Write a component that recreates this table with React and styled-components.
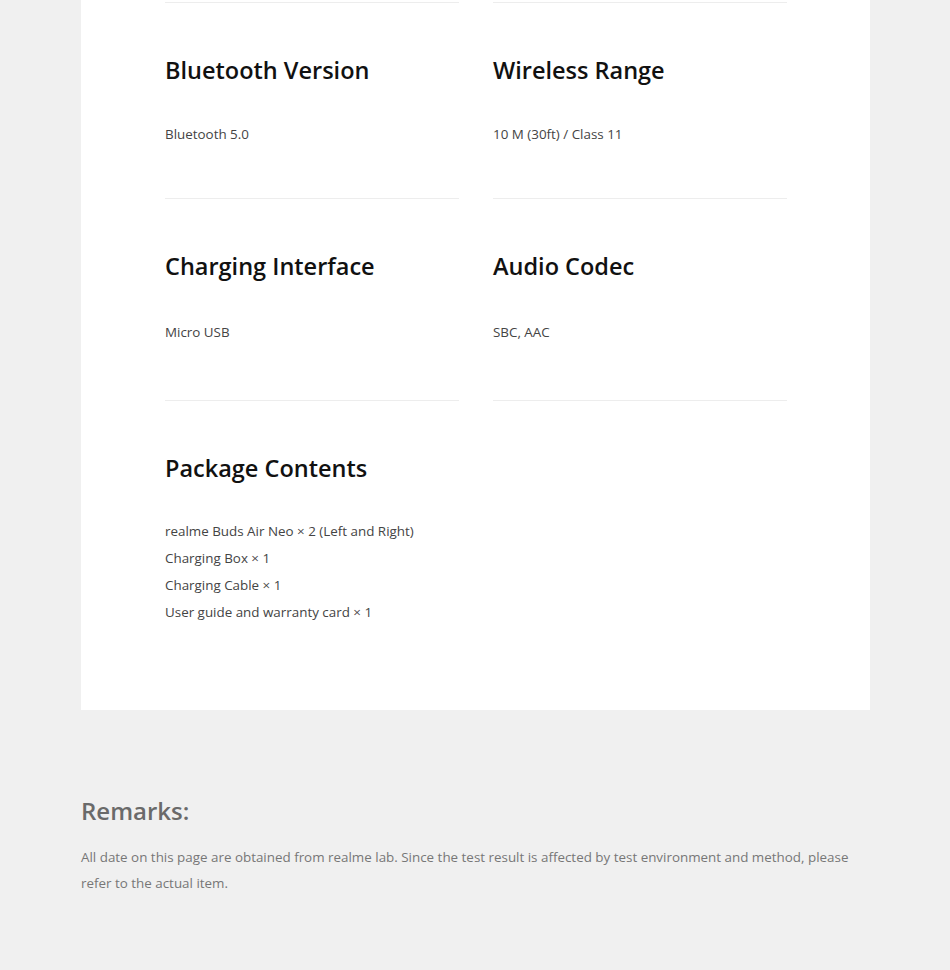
import React from "react";
import styled, { createGlobalStyle } from "styled-components";

const GlobalStyle = createGlobalStyle`
  body {
    margin: 0;
    background: #f0f0f0;
    font-family: "Open Sans", "Noto Sans", sans-serif;
  }
`;

const specs = [
  { title: "Bluetooth Version", values: ["Bluetooth 5.0"] },
  { title: "Wireless Range", values: ["10 M (30ft) / Class 11"] },
  { title: "Charging Interface", values: ["Micro USB"], tall: true },
  { title: "Audio Codec", values: ["SBC, AAC"], tall: true },
  {
    title: "Package Contents",
    values: [
      "realme Buds Air Neo × 2 (Left and Right)",
      "Charging Box × 1",
      "Charging Cable × 1",
      "User guide and warranty card × 1",
    ],
  },
];

function App() {
  return (
    <Page>
      <GlobalStyle />
      <Card>
        <SpecGrid>
          {specs.map((spec) => (
            <SpecCell key={spec.title} $tall={spec.tall}>
              <SpecTitle>{spec.title}</SpecTitle>
              <SpecValues $tall={spec.tall} $list={spec.values.length > 1}>
                {spec.values.map((v) => (
                  <p key={v}>{v}</p>
                ))}
              </SpecValues>
            </SpecCell>
          ))}
          <SpecCell />
        </SpecGrid>
      </Card>
      <Remarks>
        <h3>Remarks:</h3>
        <p>
          All date on this page are obtained from realme lab. Since the test
          result is affected by test environment and method, please refer to
          the actual item.
        </p>
      </Remarks>
    </Page>
  );
}

export default App;

const Page = styled.div`
  min-height: 100vh;
  box-sizing: border-box;
  padding-bottom: 40px;
`;

const Card = styled.div`
  width: 789px;
  margin-left: 81px;
  background: #fff;
  padding: 2px 0 34px 84px;
  box-sizing: border-box;
`;

const SpecGrid = styled.div`
  display: grid;
  grid-template-columns: 294px 294px;
  column-gap: 34px;
`;

const SpecCell = styled.div`
  border-top: 1px solid #ededed;
  padding: 51px 0 ${(p) => (p.$tall ? "54px" : "50px")};
`;

const SpecTitle = styled.h2`
  margin: 0;
  font-size: 23.5px;
  line-height: 32px;
  font-weight: 600;
  color: #111;
`;

const SpecValues = styled.div`
  margin-top: ${(p) => (p.$tall ? "37px" : p.$list ? "34px" : "35px")};
  p {
    margin: 0;
    font-size: 13.4px;
    line-height: 27px;
    color: #444;
  }
`;

const Remarks = styled.div`
  width: 789px;
  margin: 85px 0 0 81px;
  h3 {
    margin: 0;
    font-size: 24px;
    line-height: 32px;
    font-weight: 600;
    color: #6a6a6a;
  }
  p {
    margin: 17px 0 0;
    font-size: 13.4px;
    line-height: 26px;
    color: #777;
  }
`;
